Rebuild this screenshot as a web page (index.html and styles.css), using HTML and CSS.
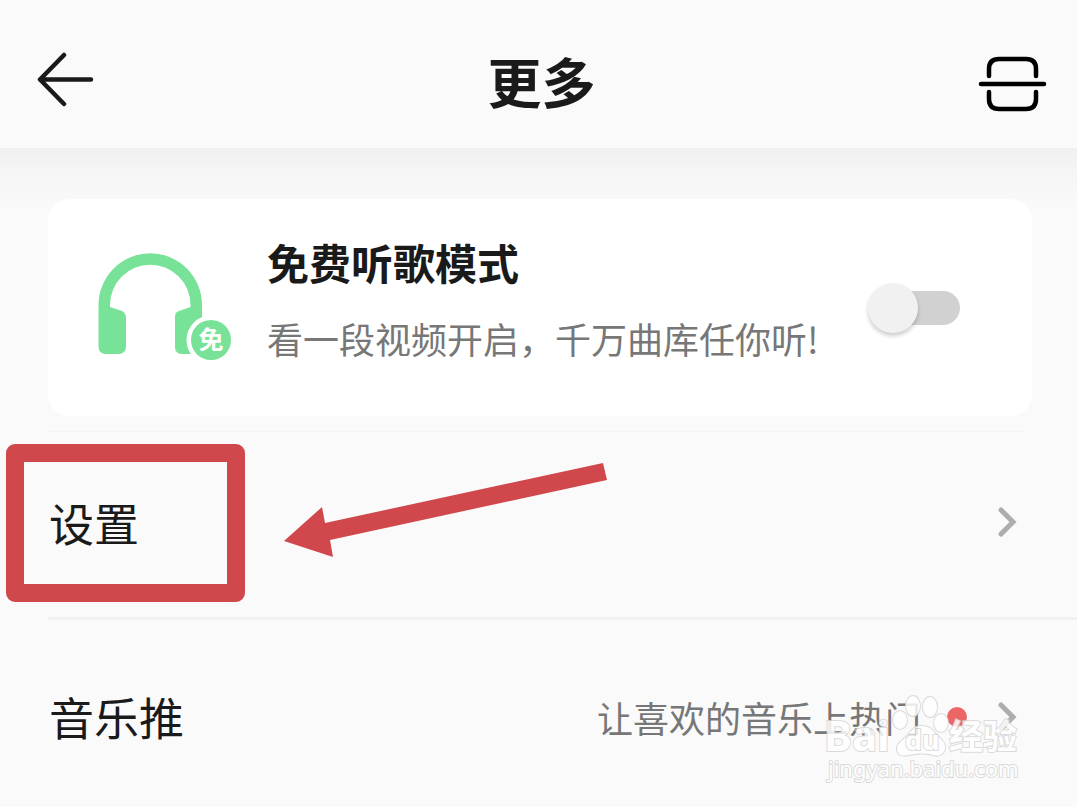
FILE: index.html
```html
<!DOCTYPE html>
<html lang="zh-CN">
<head>
  <meta charset="UTF-8" />
  <meta name="viewport" content="width=device-width, initial-scale=1.0"/>
  <title>更多</title>
  <link rel="stylesheet" href="styles.css">
</head>
<body>
  <header class="topbar">
    <button class="icon-btn" type="button" aria-label="返回">
      <svg width="60" height="56" viewBox="0 0 60 56" fill="none" stroke="#1a1a1a" stroke-width="4.500" stroke-linecap="round" stroke-linejoin="round">
        <path d="M28 4L4 28.500L28 53M4 28.500H55"/>
      </svg>
    </button>
    <h1>更多</h1>
    <button class="icon-btn" type="button" aria-label="扫一扫">
      <svg width="72" height="68" viewBox="0 0 72 68" fill="none" stroke="#000" stroke-width="4.500" stroke-linecap="round">
        <path d="M14 31V24Q14 14 24 14H51Q61 14 61 24V31M6 39H69M14 47V54Q14 64 24 64H51Q61 64 61 54V47"/>
      </svg>
    </button>
  </header>

  <main>
    <section class="promo">
      <div class="card">
        <svg class="headphones" width="136" height="110" viewBox="0 0 136 110">
          <path fill="#78e298" d="M1.500 52A51.700 51.700 0 0 1 105 52V93Q105 101 97 101H85Q78 101 78 94V64Q78 59 82 58L93.500 54V52A40 40 0 0 0 13 52V54L25 58Q29 60 29 65V93Q29 101 21 101H9Q1.500 101 1.500 93Z"/>
          <circle cx="114" cy="87" r="24.500" fill="#fff"/>
          <circle cx="114" cy="87" r="20" fill="#78e298"/>
          <text class="badge-text" x="114" y="96" text-anchor="middle">免</text>
        </svg>
        <label class="card-text" for="freeMode">
          <strong>免费听歌模式</strong>
          <span>看一段视频开启，千万曲库任你听!</span>
        </label>
        <input class="switch" type="checkbox" id="freeMode">
      </div>
    </section>

    <nav>
      <a class="row settings" href="#settings">
        <span class="name">设置</span>
        <svg class="chevron" width="20" height="30" viewBox="0 0 20 30"><path d="M4 3L16 15L4 27"/></svg>
      </a>
      <a class="row music" href="#music">
        <span class="name">音乐推</span>
        <span class="hint">让喜欢的音乐上热门</span>
        <span class="dot"></span>
        <svg class="chevron" width="20" height="30" viewBox="0 0 20 30"><path d="M4 3L16 15L4 27"/></svg>
      </a>
    </nav>

    <div class="mark-box"></div>
    <svg class="mark-arrow" width="330" height="100" viewBox="0 0 330 100">
      <path fill="#d0484c" d="M4 81L42 47L45 63L323 3L327 20L50 80L53 97Z"/>
    </svg>
    <svg class="watermark" width="206" height="104" viewBox="0 0 206 104">
      <text class="wm-logo" x="4" y="67">Bai</text>
      <ellipse cx="93" cy="22" rx="7" ry="10"/>
      <ellipse cx="110" cy="23" rx="7" ry="10"/>
      <ellipse cx="80" cy="36" rx="7" ry="9"/>
      <ellipse cx="121" cy="39" rx="7" ry="9"/>
      <path d="M101 42C94 42 91 47 87 52C82 57 76 60 77 66C78 72 84 72 89 71C97 69 106 69 113 71C119 73 125 70 125 63C125 57 120 55 115 49C111 44 108 42 101 42Z"/>
      <text class="wm-du" x="85" y="66">du</text>
      <text class="wm-cn" x="129" y="65">经验</text>
      <text class="wm-url" x="8" y="93">jingyan.baidu.com</text>
    </svg>
  </main>
</body>
</html>
```
FILE: styles.css
```css
* {
  box-sizing: border-box;
}
body {
  margin: 0;
  background: #fafafa;
  color: #1a1a1a;
  font-family: "Noto Sans CJK SC", sans-serif;
}
.topbar {
  display: flex;
  align-items: center;
  justify-content: space-between;
  height: 148px;
  padding: 10px 30px 0 36px;
}
h1 {
  margin: 0;
  padding-top: 4px;
  font-size: 54px;
  line-height: 80px;
}
.icon-btn {
  display: flex;
  width: 72px;
  padding: 0;
  border: none;
  background: none;
}
.icon-btn svg {
  flex: none;
}
main {
  position: relative;
}
.promo {
  padding: 51px 45px 15px 48px;
  background: linear-gradient(#f0f0f0, #f5f5f5 24px, #fafafa 60px);
}
.card {
  display: flex;
  align-items: center;
  height: 217px;
  padding: 0 72px 0 49px;
  border-radius: 22px;
  background: #fff;
}
.headphones {
  flex: none;
  margin-right: 34px;
}
.badge-text {
  font-size: 25px;
  font-weight: bold;
  fill: #fff;
}
.card-text {
  display: flex;
  flex: 1;
  flex-direction: column;
  gap: 16px;
  padding-bottom: 16px;
  white-space: nowrap;
}
.card-text strong {
  font-size: 42px;
  line-height: 60px;
}
.card-text span {
  font-size: 36px;
  line-height: 60px;
  color: #777;
}
.switch {
  appearance: none;
  position: relative;
  flex: none;
  width: 92px;
  height: 50px;
  margin: 0;
}
.switch::before {
  content: "";
  position: absolute;
  inset: 8px 0 8px 8px;
  border-radius: 17px;
  background: #d1d1d1;
}
.switch::after {
  content: "";
  position: absolute;
  top: 0;
  left: 0;
  width: 50px;
  height: 50px;
  border-radius: 50%;
  background: #f1f1f1;
  box-shadow: 0 3px 4px rgba(0, 0, 0, 0.2);
}
.switch:checked::after {
  left: 42px;
}
nav::before {
  content: "";
  display: block;
  height: 1px;
  margin: 0 52px 0 48px;
  background: #f6f6f6;
}
.row {
  display: flex;
  align-items: center;
  height: 188px;
  padding: 0 60px 0 49px;
  color: inherit;
  text-decoration: none;
}
.settings {
  padding-bottom: 8px;
  background: linear-gradient(#f1f1f1, #f1f1f1) 48px 100% / 100% 3px no-repeat;
}
.music {
  height: 187px;
  padding-top: 6px;
}
.name {
  flex: 1;
  font-size: 45px;
}
.hint {
  font-size: 36px;
  color: #777;
}
.dot {
  width: 20px;
  height: 20px;
  margin: 0 30px 0 26px;
  border-radius: 50%;
  background: #ec6666;
}
.chevron {
  flex: none;
  fill: none;
  stroke: #adadad;
  stroke-width: 5;
  stroke-linecap: round;
}
.mark-box {
  position: absolute;
  top: 296px;
  left: 6px;
  width: 239px;
  height: 158px;
  border: 18px solid #d0484c;
  border-radius: 9px;
  pointer-events: none;
}
.mark-arrow {
  position: absolute;
  top: 312px;
  left: 280px;
  pointer-events: none;
}
.watermark {
  position: absolute;
  top: 536px;
  right: 51px;
  fill: #fff;
  stroke: #d6d6d6;
  stroke-width: 2;
  paint-order: stroke;
  opacity: 0.85;
  font-family: "Noto Sans", "Noto Sans CJK SC", sans-serif;
  pointer-events: none;
}
.wm-logo {
  font-size: 42px;
  font-weight: bold;
}
.wm-du {
  font-size: 27px;
  font-weight: bold;
}
.wm-cn {
  font-size: 34px;
  font-weight: bold;
}
.wm-url {
  font-size: 22px;
}
```
